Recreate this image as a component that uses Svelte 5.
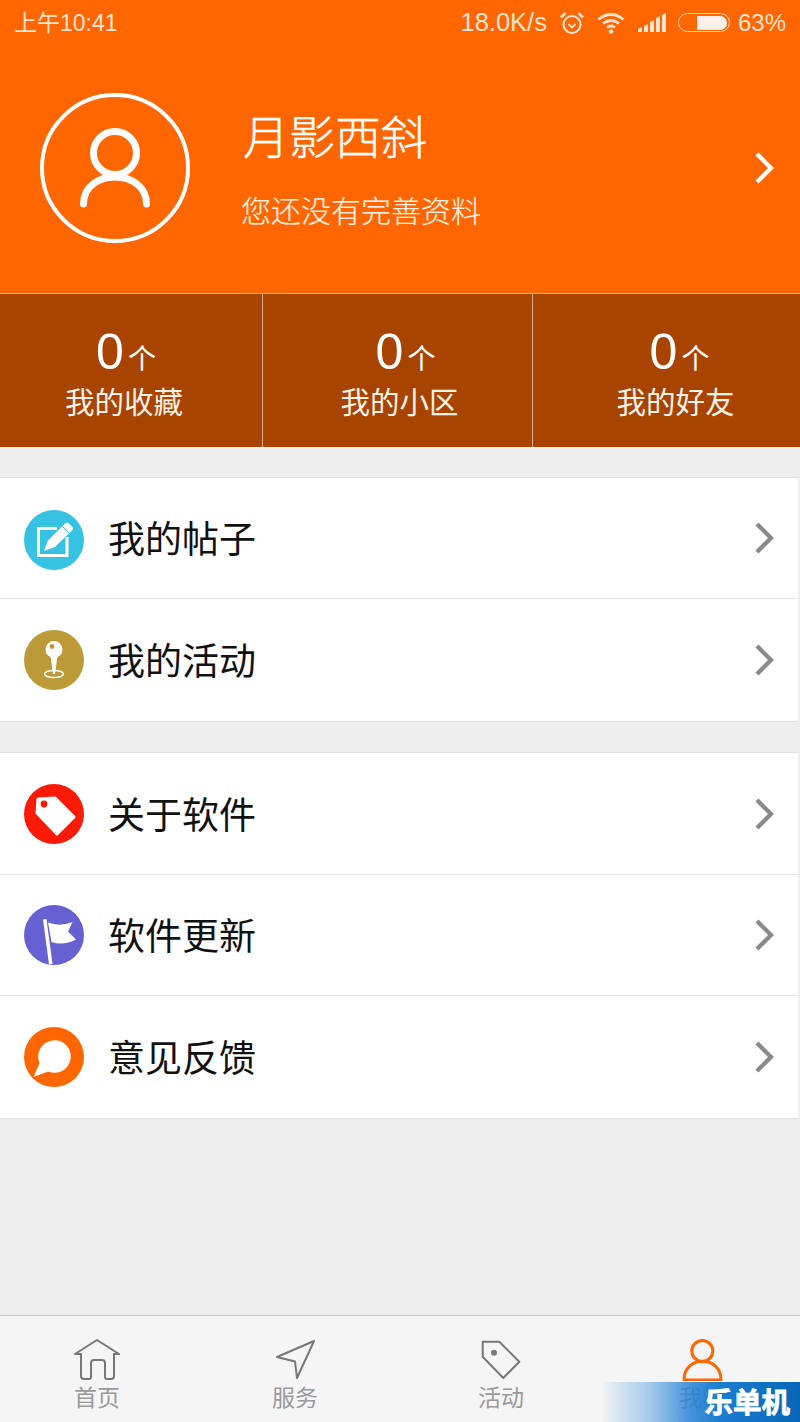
<script>
  const stats = [
    { label: "我的收藏", w: 262, pad: "0 14px 0 0", nudge: 2 },
    { label: "我的小区", w: 270, pad: "0 0 0 4px", nudge: 6 },
    { label: "我的好友", w: 267, pad: "0 0 0 19px", nudge: 4 }
  ];
  const groupOne = [
    { label: "我的帖子", color: "#36c3e3", icon: "edit" },
    { label: "我的活动", color: "#bd9a38", icon: "pin" }
  ];
  const groupTwo = [
    { label: "关于软件", color: "#fb1a06", icon: "tag" },
    { label: "软件更新", color: "#6660d2", icon: "flag" },
    { label: "意见反馈", color: "#ff6600", icon: "chat" }
  ];
  const tabs = ["首页", "服务", "活动", "我的"];
</script>

{#snippet chevron(color, width)}
  <svg class="chevron" viewBox="0 0 20 32" width="20" height="32">
    <path d="M3 2 L17 16 L3 30" fill="none" stroke={color} stroke-width={width} />
  </svg>
{/snippet}

{#snippet menuIcon(item)}
  <svg viewBox="0 0 60 60" width="60" height="60" class="round icon-{item.icon}">
    <circle cx="30" cy="30" r="30" fill={item.color} />
    {#if item.icon === "edit"}
      <path d="M33 18.500 H14.500 V45.500 H43 V27" fill="none" stroke="#fff" stroke-width="3" />
      <path d="M20 41 L24 30.500 L41 13.500 Q43 11.500 45 13.500 L48 16.500 Q50 18.500 48 20.500 L31 37 Z" fill="#fff" stroke={item.color} stroke-width="1" paint-order="stroke" />
      <path d="M38.500 16.500 L45.500 23.500" stroke={item.color} stroke-width="1" />
    {:else if item.icon === "pin"}
      <circle cx="30" cy="19.500" r="8.500" fill="#fff" />
      <circle cx="28" cy="16.500" r="2.400" fill={item.color} />
      <path d="M26.500 26 H33.500 L31 44 H29 Z" fill="#fff" />
      <ellipse cx="30" cy="44" rx="9.500" ry="3.500" fill="none" stroke="#fff" stroke-width="1.600" />
    {:else if item.icon === "tag"}
      <path d="M14 15 L31 14 L50 33 L33 50 L13 29 Z" fill="#fff" stroke="#fff" stroke-width="3" stroke-linejoin="round" />
      <circle cx="20" cy="20" r="3.400" fill={item.color} />
    {:else if item.icon === "flag"}
      <path d="M19 14.500 L22.500 14 L28.500 59 L25 59.500 Z" fill="#fff" />
      <path d="M24 17.500 Q36 22 48.500 17 L44 26.500 L52 34.500 Q40 41 27.500 37 Z" fill="#fff" />
    {:else}
      <path d="M15.500 36 L9.500 50 L24 44.500 A16.300 16.300 0 1 0 15.500 36 Z" fill="#fff" />
    {/if}
  </svg>
{/snippet}

{#snippet row(item)}
  <div class="row">
    {@render menuIcon(item)}
    <span class="row-label">{item.label}</span>
    {@render chevron("#8a8a8a", 4.400)}
  </div>
{/snippet}

<div class="page">
  <header class="top">
    <div class="status">
      <span class="clock">上午10:41</span>
      <div class="status-right">
        <span class="speed">18.0K/s</span>
        <svg viewBox="0 0 24 24" width="24" height="24" class="alarm">
          <circle cx="12" cy="13.500" r="8.500" fill="none" stroke="#ffe3d0" stroke-width="2.200" />
          <path d="M8.500 13 L12 16.500 L15.500 13" fill="none" stroke="#ffe3d0" stroke-width="1.800" />
          <path d="M1 6.500 L5.500 2 M23 6.500 L18.500 2" stroke="#ffe3d0" stroke-width="2.600" />
        </svg>
        <svg viewBox="0 0 28 22" width="28" height="22" class="wifi">
          <path d="M1.500 7.500 Q14 -2.500 26.500 7.500 M6 11.500 Q14 5.500 22 11.500 M10 15.500 Q14 12.500 18 15.500" fill="none" stroke="#ffe3d0" stroke-width="2.800" />
          <circle cx="14" cy="19.500" r="2.300" fill="#ffe3d0" />
        </svg>
        <svg viewBox="0 0 28 20" width="28" height="20" class="signal">
          <path d="M0 16 L4 14 V19 H0 Z M6 13 L10 11 V19 H6 Z M12 9 L16 7 V19 H12 Z M18 5 L22 3 V19 H18 Z M24 2 L28 0 V19 H24 Z" fill="#ffe3d0" />
        </svg>
        <div class="battery"><div class="battery-fill"></div></div>
        <span class="percent">63%</span>
      </div>
    </div>

    <div class="profile">
      <div class="avatar">
        <svg viewBox="0 0 150 150" width="150" height="150">
          <circle cx="75" cy="75" r="73" fill="none" stroke="#fff" stroke-width="4" />
          <circle cx="75" cy="60" r="21.500" fill="none" stroke="#fff" stroke-width="7" />
          <path d="M43.500 111 C43.500 75 106.500 75 106.500 111" fill="none" stroke="#fff" stroke-width="7" stroke-linecap="round" />
        </svg>
      </div>
      <div class="who">
        <div class="name">月影西斜</div>
        <div class="hint">您还没有完善资料</div>
      </div>
      {@render chevron("#fff", 4.400)}
    </div>
  </header>

  <section class="stats">
    {#each stats as s, i}
      <div class="stat" class:divided={i > 0} style="width: {s.w}px">
        <div style="padding: {s.pad}">
          <div class="count" style="margin-left: {s.nudge * 2}px"><b>0</b><span>个</span></div>
          <div class="stat-label">{s.label}</div>
        </div>
      </div>
    {/each}
  </section>

  <section class="group first">
    {#each groupOne as item}
      {@render row(item)}
    {/each}
  </section>

  <section class="group second">
    {#each groupTwo as item}
      {@render row(item)}
    {/each}
  </section>

  <nav class="tabbar">
    {#each tabs as tab, i}
      <div class="tab tab-{i}" class:active={i === 3}>
        {#if i === 0}
          <svg viewBox="0 0 46 42" width="46" height="42">
            <path d="M1 15 L23 1 L45 15 H40 V37 Q40 40 37 40 H33 Q31 40 31 38 V24 Q31 21 28 21 H20 Q17 21 17 24 V38 Q17 40 15 40 H10 Q7 40 7 37 V15 Z" fill="none" stroke="#777" stroke-width="2" stroke-linejoin="round" />
          </svg>
        {:else if i === 1}
          <svg viewBox="0 0 46 42" width="46" height="42">
            <path d="M42 2 L5 18 L23 22.500 L25 39 Z" fill="none" stroke="#777" stroke-width="2" stroke-linejoin="round" />
          </svg>
        {:else if i === 2}
          <svg viewBox="0 0 46 42" width="46" height="42">
            <path d="M4.700 2.700 H21.300 L41.300 22.700 L25.300 39 L4.700 17.700 Z" fill="none" stroke="#777" stroke-width="2" stroke-linejoin="round" />
            <circle cx="16" cy="13.700" r="3" fill="#777" />
          </svg>
        {:else}
          <svg viewBox="0 0 46 42" width="46" height="42">
            <circle cx="23.300" cy="12" r="10.500" fill="none" stroke="#ff6600" stroke-width="3" />
            <path d="M5 41 C5 16 42 16 42 41 Z" fill="none" stroke="#ff6600" stroke-width="3" stroke-linejoin="round" />
          </svg>
        {/if}
        <span>{tab}</span>
      </div>
    {/each}
    <div class="watermark">乐单机</div>
  </nav>
</div>

<style>
  :global(body) {
    margin: 0;
  }

  .page {
    position: relative;
    width: 800px;
    height: 1422px;
    background: #eeeeee;
    overflow: hidden;
    display: flex;
    flex-direction: column;
    font-family: "Noto Sans CJK SC", "Liberation Sans", sans-serif;
  }

  .top {
    height: 293px;
    background: #ff6600;
    color: #fff;
    box-sizing: border-box;
  }

  .status {
    height: 46px;
    display: flex;
    align-items: center;
    justify-content: space-between;
    padding: 0 14px;
    color: #ffe3d0;
    font-family: "Liberation Sans", "Noto Sans CJK SC", sans-serif;
    font-size: 25px;
  }

  .clock {
    font-size: 23px;
    margin-bottom: 4px;
  }

  .status-right {
    display: flex;
    align-items: center;
    margin-bottom: 1px;
  }

  .speed {
    font-size: 25.500px;
  }

  .percent {
    font-size: 24px;
  }

  .alarm {
    margin-left: 13px;
  }

  .wifi {
    margin-left: 13px;
  }

  .signal {
    margin-left: 13px;
    margin-right: 12px;
  }

  .battery {
    box-sizing: border-box;
    margin-right: 8px;
    width: 52px;
    height: 19px;
    border: 1.500px solid #ffd9bf;
    border-radius: 10px;
    padding: 1.500px 2px;
    display: flex;
    justify-content: flex-end;
  }

  .battery-fill {
    width: 30px;
    background: #fff0ee;
    border-radius: 0 7px 7px 0;
  }

  .profile {
    display: flex;
    align-items: center;
    padding: 47px 26px 0 40px;
  }

  .avatar {
    display: flex;
    margin-right: 53px;
  }

  .who {
    flex: 1;
    margin-top: 2px;
  }

  .name {
    font-size: 46px;
    line-height: 60px;
    font-weight: 300;
    margin-top: -3px;
    -webkit-text-stroke: 0.400px #fff;
  }

  .hint {
    font-size: 30px;
    line-height: 44px;
    margin-top: 23px;
    margin-left: -2px;
    font-weight: 300;
    color: #fff0e4;
    -webkit-text-stroke: 0.200px #fff0e4;
  }

  .chevron {
    flex: none;
  }

  .stats {
    height: 154px;
    display: flex;
    background: #a94400;
    border-top: 1px solid #f0b48c;
    box-sizing: border-box;
    color: #fff;
  }

  .stat {
    box-sizing: border-box;
    text-align: center;
    padding-top: 32px;
  }

  .divided {
    border-left: 1px solid #d8a888;
  }

  .count {
    height: 52px;
    display: flex;
    justify-content: center;
    align-items: baseline;
    gap: 4px;
    line-height: 52px;
  }

  .count b {
    font-family: "Liberation Sans", sans-serif;
    font-weight: 400;
    font-size: 50px;
  }

  .count span {
    font-size: 28px;
  }

  .stat-label {
    font-size: 29.500px;
    line-height: 44px;
    color: #fff2e8;
  }

  .group {
    margin-right: 2px;
    background: #fff;
    border-top: 1px solid #e2e2e2;
    border-bottom: 1px solid #e2e2e2;
  }

  .first {
    margin-top: 30px;
  }

  .second {
    margin-top: 30px;
  }

  .row {
    height: 122px;
    display: flex;
    align-items: center;
    padding: 0 24px;
    box-sizing: border-box;
    border-bottom: 1px solid #e4e4e4;
  }

  .row:last-child {
    border-bottom: none;
  }

  .first .row:first-child,
  .second .row:nth-child(2) {
    height: 121px;
  }

  .icon-edit {
    margin-top: 3px;
  }

  .round {
    flex: none;
  }

  .row-label {
    flex: 1;
    margin-left: 24px;
    margin-bottom: 2px;
    font-size: 37px;
    color: #111;
  }

  .tabbar {
    position: absolute;
    left: 0;
    right: 0;
    bottom: 0;
    height: 107px;
    box-sizing: border-box;
    display: flex;
    background: #f5f5f5;
    border-top: 1px solid #c8c8c8;
  }

  .tab {
    position: absolute;
    top: 23px;
    width: 60px;
    display: flex;
    flex-direction: column;
    align-items: center;
    color: #9a9a9a;
    font-size: 23px;
    line-height: 30px;
  }

  .tab-0 {
    left: 67px;
  }

  .tab-1 {
    left: 265px;
  }

  .tab-2 {
    left: 471px;
  }

  .tab-3 {
    left: 672px;
  }

  .watermark {
    position: absolute;
    right: 0;
    bottom: 0;
    width: 200px;
    height: 40px;
    box-sizing: border-box;
    padding-right: 10px;
    text-align: right;
    background: linear-gradient(90deg, rgba(80, 160, 225, 0) 0%, rgba(80, 160, 225, 0.5) 25%, rgba(40, 130, 215, 0.85) 45%, #1b7dd0 60%, #0866b8 100%);
    color: #fff;
    font-size: 28.500px;
    font-weight: 700;
    line-height: 38px;
    -webkit-text-stroke: 0.800px #fff;
  }
</style>
